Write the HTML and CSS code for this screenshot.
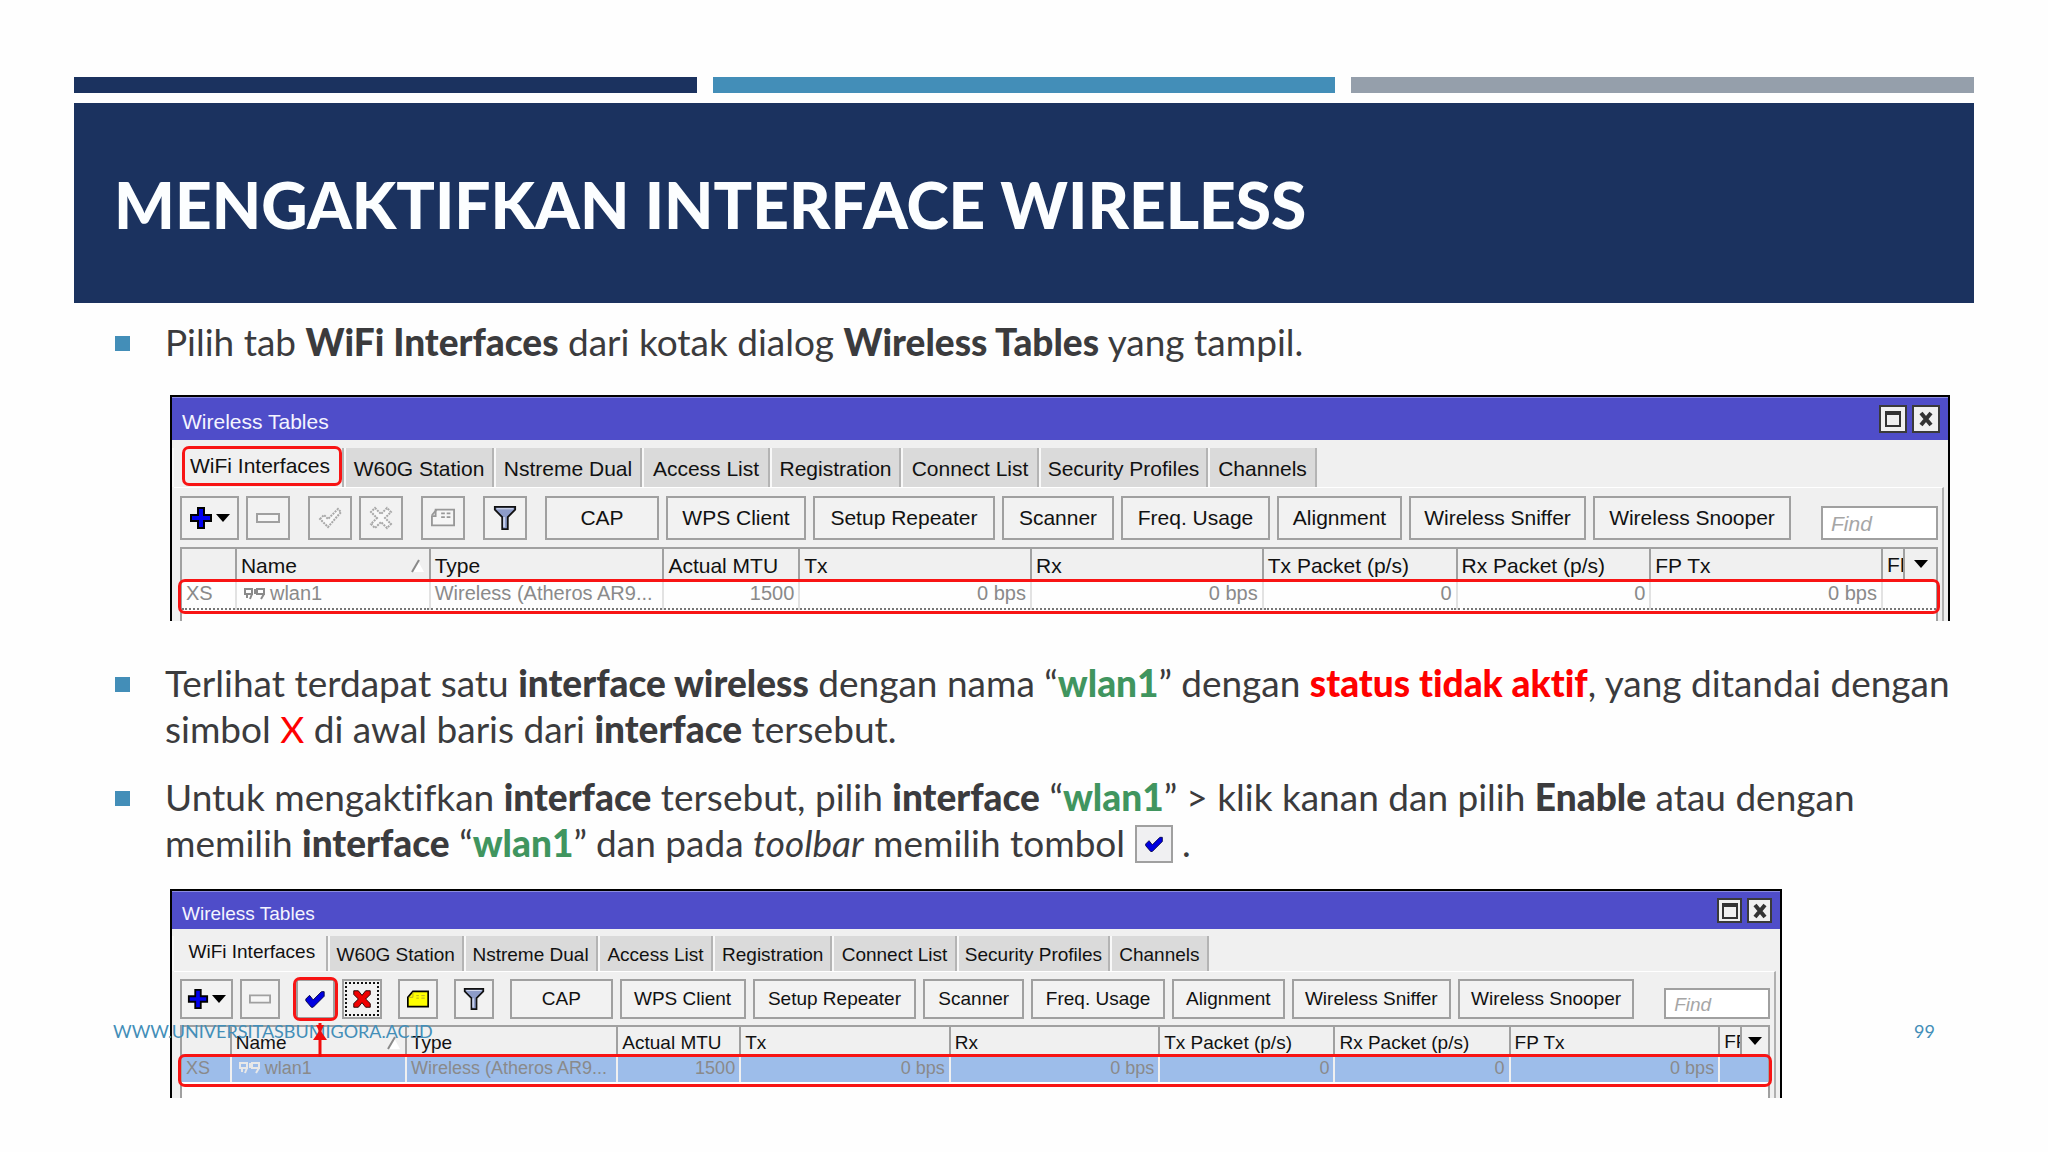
FILE: index.html
```html
<!DOCTYPE html>
<html lang="id">
<head>
  <meta charset="UTF-8" />
  <meta name="viewport" content="width=device-width, initial-scale=1.0"/>
  <title>Mengaktifkan Interface Wireless</title>
  <link rel="stylesheet" href="styles.css">
</head>
<body>

  <!-- shared icons -->
  <svg class="sprite" aria-hidden="true">
    <symbol id="plus" viewBox="0 0 24 24">
      <path d="M8 1h8v7h7v8h-7v7H8v-7H1V8h7z" fill="#000"/>
      <path d="M10 3h4v7h7v4h-7v7h-4v-7H3v-4h7z" fill="#0000f0"/>
    </symbol>
    <symbol id="caret" viewBox="0 0 14 8">
      <path d="M0 0h14L7 8z" fill="#000"/>
    </symbol>
    <symbol id="minus" viewBox="0 0 24 24">
      <path d="M1 8h22v8H1z" fill="#f6f6f6" stroke="#a0a0a0" stroke-width="2"/>
    </symbol>
    <symbol id="check-off" viewBox="0 0 24 24">
      <path d="M2 13l4-4 4 4L20 3l3 3L10 21z" fill="#f8f8f8" stroke="#a8a8a8" stroke-width="2" stroke-dasharray="2 1"/>
    </symbol>
    <symbol id="check-on" viewBox="0 0 24 24">
      <path d="M2 12l4-4 4 5L19 4h3v5L10 21H8l-6-7z" fill="#0000e0" stroke="#000040" stroke-width="1"/>
    </symbol>
    <symbol id="cross-off" viewBox="0 0 24 24">
      <path d="M6 2l6 6 6-6 4 4-6 6 6 6-4 4-6-6-6 6-4-4 6-6-6-6z" fill="#f8f8f8" stroke="#a8a8a8" stroke-width="2" stroke-dasharray="2 1"/>
    </symbol>
    <symbol id="cross-on" viewBox="0 0 24 24">
      <path d="M3 3h5l4 5 4-5h5v4l-5 5 5 5v4h-5l-4-5-4 5H3v-4l5-5-5-5z" fill="#f00000" stroke="#200000" stroke-width="1"/>
    </symbol>
    <symbol id="card-off" viewBox="0 0 26 24">
      <path d="M7 3h18v17H1V10h4V3z" fill="#f6f6f6" stroke="#989898" stroke-width="2"/>
      <path d="M1 9l5-6M11 7h4M17 7h4M11 11h4M17 11h4" fill="none" stroke="#989898" stroke-width="2"/>
    </symbol>
    <symbol id="card-on" viewBox="0 0 26 24">
      <path d="M7 3h18v18H1V10l6-7z" fill="#ffff00" stroke="#000" stroke-width="2"/>
      <path d="M2 10h5V4M11 8h3M17 8h4M11 11h3M17 11h4" fill="none" stroke="#b0a030" stroke-width="1"/>
    </symbol>
    <symbol id="funnel" viewBox="0 0 24 26">
      <path d="M1 1h22v3l-8 8v13H9V12L1 4z" fill="#8d9cc8" stroke="#111" stroke-width="2"/>
      <path d="M3 3h18" stroke="#dfe4f4" stroke-width="1"/>
      <path d="M11 12v11" stroke="#c8d0ea" stroke-width="2"/>
    </symbol>
    <symbol id="maximize" viewBox="0 0 18 18">
      <path d="M2 2h14v14H2z" fill="none" stroke="#333" stroke-width="2"/>
      <path d="M1 3h16" stroke="#333" stroke-width="4"/>
    </symbol>
    <symbol id="close" viewBox="0 0 18 18">
      <path d="M4 3l10 12M14 3L4 15" stroke="#333" stroke-width="4"/>
    </symbol>
    <symbol id="sort" viewBox="0 0 14 14">
      <path d="M7 2l6 11H2" fill="#fff"/>
      <path d="M1 13L8 1" stroke="#8a8a8a" stroke-width="2"/>
    </symbol>
    <symbol id="wlan" viewBox="0 0 24 14">
      <path d="M2 3h7v5H2zM14 3h7v5h-7zM4 8v4M12 3v5M9 8l-2 5M21 8l-3 5" fill="none" stroke="currentColor" stroke-width="2"/>
    </symbol>
  </svg>

  <main class="slide">
    <div class="stripes">
      <span class="navy"></span>
      <span class="blue"></span>
      <span class="grey"></span>
    </div>

    <header class="slide-title">
      <h1>MENGAKTIFKAN INTERFACE WIRELESS</h1>
    </header>

    <ul class="points">
      <li>
        <p>Pilih tab <b>WiFi Interfaces</b> dari kotak dialog <b>Wireless Tables</b> yang tampil.</p>

        <section class="window">
          <div class="title-bar">
            <span>Wireless Tables</span>
            <button aria-label="Maximize"><svg><use href="#maximize"/></svg></button>
            <button aria-label="Close"><svg><use href="#close"/></svg></button>
          </div>
          <div class="tabs">
            <button class="active">WiFi Interfaces<i class="mark"></i></button>
            <button>W60G Station</button>
            <button>Nstreme Dual</button>
            <button>Access List</button>
            <button>Registration</button>
            <button>Connect List</button>
            <button>Security Profiles</button>
            <button>Channels</button>
          </div>
          <div class="pane">
            <div class="toolbar">
              <button aria-label="Add"><svg><use href="#plus"/></svg><svg class="caret"><use href="#caret"/></svg></button>
              <button class="wide-gap" aria-label="Remove"><svg><use href="#minus"/></svg></button>
              <button aria-label="Enable"><svg><use href="#check-off"/></svg></button>
              <button class="wide-gap" aria-label="Disable"><svg><use href="#cross-off"/></svg></button>
              <button class="wide-gap" aria-label="Comment"><svg><use href="#card-off"/></svg></button>
              <button class="wide-gap" aria-label="Filter"><svg><use href="#funnel"/></svg></button>
              <button>CAP</button>
              <button>WPS Client</button>
              <button>Setup Repeater</button>
              <button>Scanner</button>
              <button>Freq. Usage</button>
              <button>Alignment</button>
              <button>Wireless Sniffer</button>
              <button class="last">Wireless Snooper</button>
              <input type="text" placeholder="Find" aria-label="Find">
            </div>
            <div class="grid">
              <table>
                <colgroup>
                  <col class="c-flag"><col class="c-name"><col class="c-type"><col class="c-mtu"><col class="c-rate">
                  <col class="c-rate"><col class="c-pkt"><col class="c-pkt"><col class="c-rate"><col class="c-more">
                </colgroup>
                <thead>
                  <tr>
                    <th></th>
                    <th><div class="split">Name<svg class="sort"><use href="#sort"/></svg></div></th>
                    <th>Type</th>
                    <th>Actual MTU</th>
                    <th>Tx</th>
                    <th>Rx</th>
                    <th>Tx Packet (p/s)</th>
                    <th>Rx Packet (p/s)</th>
                    <th>FP Tx</th>
                    <th><div class="more"><span>FP</span><button aria-label="Columns"><svg class="caret"><use href="#caret"/></svg></button></div></th>
                  </tr>
                </thead>
                <tbody>
                  <tr>
                    <td>XS</td>
                    <td><svg class="wlan"><use href="#wlan"/></svg>wlan1</td>
                    <td>Wireless (Atheros AR9...</td>
                    <td class="num">1500</td>
                    <td class="num">0 bps</td>
                    <td class="num">0 bps</td>
                    <td class="num">0</td>
                    <td class="num">0</td>
                    <td class="num">0 bps</td>
                    <td></td>
                  </tr>
                </tbody>
              </table>
              <i class="mark"></i>
            </div>
          </div>
        </section>
      </li>

      <li>
        <p>Terlihat terdapat satu <b>interface wireless</b> dengan nama “<b class="green">wlan1</b>” dengan <b class="red">status tidak aktif</b>, yang ditandai dengan<br>
        simbol <span class="red">X</span> di awal baris dari <b>interface</b> tersebut.</p>
      </li>

      <li>
        <p>Untuk mengaktifkan <b>interface</b> tersebut, pilih <b>interface</b> “<b class="green">wlan1</b>” &gt; klik kanan dan pilih <b>Enable</b> atau dengan<br>
        memilih <b>interface</b> “<b class="green">wlan1</b>” dan pada <em>toolbar</em> memilih tombol <button class="inline-check" aria-label="Enable"><svg><use href="#check-on"/></svg></button> .</p>

        <section class="window small">
          <div class="title-bar">
            <span>Wireless Tables</span>
            <button aria-label="Maximize"><svg><use href="#maximize"/></svg></button>
            <button aria-label="Close"><svg><use href="#close"/></svg></button>
          </div>
          <div class="tabs">
            <button class="active">WiFi Interfaces</button>
            <button>W60G Station</button>
            <button>Nstreme Dual</button>
            <button>Access List</button>
            <button>Registration</button>
            <button>Connect List</button>
            <button>Security Profiles</button>
            <button>Channels</button>
          </div>
          <div class="pane">
            <div class="toolbar">
              <button aria-label="Add"><svg><use href="#plus"/></svg><svg class="caret"><use href="#caret"/></svg></button>
              <button class="wide-gap" aria-label="Remove"><svg><use href="#minus"/></svg></button>
              <button aria-label="Enable"><svg><use href="#check-on"/></svg><i class="mark"></i>
                <svg class="arrow" viewBox="0 0 14 34"><path d="M7 0v34" stroke="#f00c0c" stroke-width="3"/><path d="M3 2h8L7 10zM7 7l7 10H0z" fill="#f00c0c"/></svg></button>
              <button class="wide-gap focused" aria-label="Disable"><svg><use href="#cross-on"/></svg></button>
              <button class="wide-gap" aria-label="Comment"><svg><use href="#card-on"/></svg></button>
              <button class="wide-gap" aria-label="Filter"><svg><use href="#funnel"/></svg></button>
              <button>CAP</button>
              <button>WPS Client</button>
              <button>Setup Repeater</button>
              <button>Scanner</button>
              <button>Freq. Usage</button>
              <button>Alignment</button>
              <button>Wireless Sniffer</button>
              <button class="last">Wireless Snooper</button>
              <input type="text" placeholder="Find" aria-label="Find">
            </div>
            <div class="grid">
              <table>
                <colgroup>
                  <col class="c-flag"><col class="c-name"><col class="c-type"><col class="c-mtu"><col class="c-rate">
                  <col class="c-rate"><col class="c-pkt"><col class="c-pkt"><col class="c-rate"><col class="c-more">
                </colgroup>
                <thead>
                  <tr>
                    <th></th>
                    <th><div class="split">Name<svg class="sort"><use href="#sort"/></svg></div></th>
                    <th>Type</th>
                    <th>Actual MTU</th>
                    <th>Tx</th>
                    <th>Rx</th>
                    <th>Tx Packet (p/s)</th>
                    <th>Rx Packet (p/s)</th>
                    <th>FP Tx</th>
                    <th><div class="more"><span>FP</span><button aria-label="Columns"><svg class="caret"><use href="#caret"/></svg></button></div></th>
                  </tr>
                </thead>
                <tbody>
                  <tr class="selected">
                    <td>XS</td>
                    <td><svg class="wlan"><use href="#wlan"/></svg>wlan1</td>
                    <td>Wireless (Atheros AR9...</td>
                    <td class="num">1500</td>
                    <td class="num">0 bps</td>
                    <td class="num">0 bps</td>
                    <td class="num">0</td>
                    <td class="num">0</td>
                    <td class="num">0 bps</td>
                    <td></td>
                  </tr>
                </tbody>
              </table>
              <i class="mark"></i>
            </div>
          </div>
        </section>
      </li>
    </ul>

    <footer class="slide-footer">
      <span>WWW.UNIVERSITASBUMIGORA.AC.ID</span>
      <span>99</span>
    </footer>
  </main>

</body>
</html>
```
FILE: styles.css
```css
* {
  box-sizing: border-box;
}

body {
  margin: 0;
  background: #fefefe;
  color: #3b3b3d;
  font-family: Lato, "Open Sans", sans-serif;
}

.sprite {
  display: none;
}

.slide {
  position: relative;
  padding: 77px 74px 53px;
}

.stripes {
  display: grid;
  grid-template-columns: repeat(3, 1fr);
  gap: 16px;
  margin-bottom: 10px;
}

.stripes span {
  height: 16px;
}

.navy {
  background: #1b325f;
}

.blue {
  background: #438eb8;
}

.grey {
  background: #959fab;
}

.slide-title {
  display: flex;
  align-items: center;
  height: 200px;
  padding: 2px 40px 0;
  background: #1b325f;
}

h1 {
  margin: 0;
  color: #fcfeff;
  font-size: 64px;
  font-weight: 900;
  white-space: nowrap;
}

/* bullet list */

.points {
  margin: 0;
  padding: 16px 0 0 41px;
  list-style: none;
}

.points li {
  position: relative;
  padding-left: 50px;
  margin-bottom: 22px;
}

.points li:first-child {
  margin-bottom: 39px;
}

.points li:last-child {
  margin-bottom: 0;
}

.points li::before {
  content: "";
  position: absolute;
  left: 0;
  top: 17px;
  width: 15px;
  height: 15px;
  background: #438eb8;
}

.points p {
  margin: 0;
  font-size: 37px;
  line-height: 46px;
  font-variant-ligatures: none;
  white-space: nowrap;
}

.points b {
  font-weight: 900;
}

.green {
  color: #40955f;
}

.red {
  color: #ff0000;
}

.inline-check {
  display: inline-flex;
  align-items: center;
  justify-content: center;
  width: 38px;
  height: 38px;
  margin: 5px 0 3px;
  padding: 0;
  border: 2px solid #a0a0a0;
  background: #f0f0f2;
  vertical-align: top;
}

.inline-check svg {
  width: 20px;
  height: 20px;
}

/* dialog window */

.window {
  --text: 21px;
  --cell: 20px;
  --bar: 43px;
  --box: 28px;
  --tab: 47px;
  --tool: 44px;
  --icon: 24px;
  --find: 34px;
  --head: 30px;
  --row: 30px;
  --rest: 11px;
  --space: 8px;
  margin: 30px 24px 0 5px;
  border: 2px solid #000;
  border-bottom: 0;
  background: #f0f0f0;
  color: #111;
  font-family: "Liberation Sans", Arial, sans-serif;
  font-size: var(--text);
}

.window.small {
  --text: 19px;
  --cell: 18px;
  --bar: 38px;
  --box: 25px;
  --tab: 42px;
  --tool: 40px;
  --icon: 22px;
  --find: 31px;
  --head: 27px;
  --row: 28px;
  --rest: 16px;
  --space: 7px;
  margin: 23px 192px 0 5px;
}

.window button {
  display: flex;
  align-items: center;
  justify-content: center;
  padding: 0;
  border: 0;
  color: inherit;
  font: inherit;
  white-space: nowrap;
}

.window svg {
  width: var(--icon);
  height: var(--icon);
  flex: none;
}

.window .caret {
  width: 14px;
  height: 8px;
}

.title-bar {
  display: flex;
  align-items: center;
  gap: 5px;
  height: var(--bar);
  padding: 0 8px 0 10px;
  border-top: 1px solid #8c8ce0;
  background: #4f4dc9;
  color: #f4f4ff;
}

.title-bar span {
  flex: 1;
  padding-top: 6px;
}

.title-bar button {
  width: var(--box);
  height: var(--box);
  border: 2px solid #3a3a3a;
  background: #f0f0f0;
}

.title-bar svg {
  width: 18px;
  height: 18px;
}

.tabs {
  display: grid;
  grid-template-columns: 172fr 150fr 148fr 128fr 131fr 138fr 169fr 109fr 631fr;
  height: var(--tab);
  padding-top: var(--space);
}

.window .tabs button {
  padding-top: 3px;
  border-right: 2px solid #b4b4b4;
  border-left: 2px solid #f8f8f8;
  background: #dadada;
}

.window .tabs .active {
  position: relative;
  padding: 0 0 4px 4px;
  background: #f0f0f0;
}

.mark {
  position: absolute;
  border: 3px solid #f81414;
  border-radius: 7px;
}

.tabs .mark {
  inset: -2px 0 1px 8px;
}

.pane {
  margin: 0 4px 0 2px;
  padding: var(--space) 4px 0 6px;
  border-top: 1px solid #fff;
  border-right: 2px solid #b0b0b0;
}

.toolbar {
  display: grid;
  grid-template-columns: 66fr 62fr 51fr 62fr 62fr 62fr 121fr 147fr 189fr 119fr 156fr 132fr 184fr 228fr 117fr;
  align-items: end;
  margin-bottom: 7px;
}

.small .toolbar {
  margin-bottom: 6px;
}

.toolbar button {
  position: relative;
  gap: 3px;
  height: var(--tool);
  margin-right: 7px;
  border: 2px solid #a0a0a0;
  background: #f2f2f2;
}

.toolbar .wide-gap {
  margin-right: 18px;
}

.small .toolbar .wide-gap {
  margin-right: 16px;
}

.toolbar .last {
  margin-right: 30px;
}

.toolbar .focused::after {
  content: "";
  position: absolute;
  inset: 1px;
  border: 2px dotted #111;
}

.toolbar .mark {
  inset: -4px -5px;
}

.toolbar .arrow {
  position: absolute;
  top: 42px;
  left: 15px;
  z-index: 1;
  width: 14px;
  height: 34px;
}

.toolbar input {
  width: 100%;
  height: var(--find);
  padding: 2px 8px 0;
  border: 2px solid #a0a0a0;
  background: #fff;
  font: italic var(--text) "Liberation Sans", Arial, sans-serif;
}

.toolbar input::placeholder {
  color: #a6a6a6;
}

.grid {
  position: relative;
  padding-bottom: var(--rest);
  border: 2px solid #a0a0a0;
  border-bottom: 0;
  background: #fefefe;
}

.grid .mark {
  top: var(--head);
  left: -4px;
  right: -4px;
  height: calc(var(--row) + 5px);
}

table {
  width: 100%;
  border-collapse: collapse;
  table-layout: fixed;
}

.c-flag,
.c-more { width: 27px; }
.c-name,
.c-pkt { width: 97px; }
.c-type { width: 117px; }
.c-mtu { width: 68px; }
.c-rate { width: 116px; }

th,
td {
  padding: 0 4px;
  overflow: hidden;
  text-align: left;
  white-space: nowrap;
}

th {
  height: var(--head);
  padding-top: 4px;
  border-left: 2px solid #a0a0a0;
  background: #f0f0f0;
  font-weight: 400;
}

td {
  height: var(--row);
  border-left: 2px solid #e2e2e2;
  border-bottom: 2px dotted #777;
  color: #8a8a8a;
  font-size: var(--cell);
}

th:first-child,
td:first-child {
  border-left: 0;
}

.num {
  text-align: right;
}

.selected td {
  border-color: #f0f0f0;
  border-bottom: 0;
  background: #9dbdea;
}

th:last-child {
  padding: 0;
}

.split {
  display: flex;
  align-items: center;
  justify-content: space-between;
}

.window .sort {
  width: 14px;
  height: 14px;
}

.window .wlan {
  width: 24px;
  height: 14px;
  margin: 0 3px 0 2px;
}

.selected .wlan {
  color: #e8e8e8;
}

.more {
  display: flex;
  height: var(--head);
}

.more span {
  width: 20px;
  padding: 4px 0 0 4px;
  overflow: hidden;
}

.more button {
  flex: 1;
  border-left: 2px solid #a0a0a0;
  background: #f0f0f0;
}

/* footer sits across the lower dialog */

.slide-footer {
  position: absolute;
  left: 113px;
  right: 113px;
  top: 1020px;
  display: flex;
  justify-content: space-between;
  color: #438eb8;
  font-size: 18px;
}
```
